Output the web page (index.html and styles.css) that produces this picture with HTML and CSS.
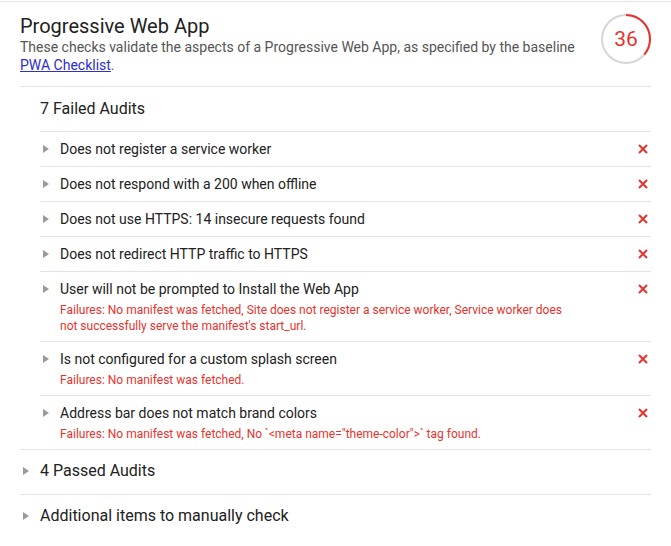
FILE: index.html
```html
<!DOCTYPE html>
<html lang="en">
<head>
<meta charset="utf-8">
<title>Progressive Web App</title>
<link rel="stylesheet" href="styles.css">
</head>
<body>
<div class="report">
  <section class="category">
    <header class="cat-header">
      <div class="cat-text">
        <h1 class="cat-title">Progressive Web App</h1>
        <p class="cat-desc">These checks validate the aspects of a Progressive Web App, as specified by the baseline <a class="cat-link" href="#">PWA Checklist</a>.</p>
      </div>
      <div class="gauge">
        <svg class="gauge-svg" width="50" height="50" viewBox="0 0 50 50">
          <circle cx="25" cy="25" r="24" fill="none" stroke="#d6d6d6" stroke-width="2"/>
          <circle cx="25" cy="25" r="24" fill="none" stroke="#e8322c" stroke-width="2" stroke-dasharray="54.3 200" transform="rotate(-90 25 25)"/>
        </svg>
        <span class="gauge-value">36</span>
      </div>
    </header>

    <div class="group">
      <div class="group-head open-head">7 Failed Audits</div>
      <ul class="audits">
        <li class="audit">
          <span class="tri"></span>
          <div class="audit-body"><div class="audit-title">Does not register a service worker</div></div>
          <span class="fail-x"><svg width="10" height="10" viewBox="0 0 10 10"><path d="M1 1L9 9M9 1L1 9" stroke="#e8322c" stroke-width="2"/></svg></span>
        </li>
        <li class="audit">
          <span class="tri"></span>
          <div class="audit-body"><div class="audit-title">Does not respond with a 200 when offline</div></div>
          <span class="fail-x"><svg width="10" height="10" viewBox="0 0 10 10"><path d="M1 1L9 9M9 1L1 9" stroke="#e8322c" stroke-width="2"/></svg></span>
        </li>
        <li class="audit">
          <span class="tri"></span>
          <div class="audit-body"><div class="audit-title">Does not use HTTPS: 14 insecure requests found</div></div>
          <span class="fail-x"><svg width="10" height="10" viewBox="0 0 10 10"><path d="M1 1L9 9M9 1L1 9" stroke="#e8322c" stroke-width="2"/></svg></span>
        </li>
        <li class="audit">
          <span class="tri"></span>
          <div class="audit-body"><div class="audit-title">Does not redirect HTTP traffic to HTTPS</div></div>
          <span class="fail-x"><svg width="10" height="10" viewBox="0 0 10 10"><path d="M1 1L9 9M9 1L1 9" stroke="#e8322c" stroke-width="2"/></svg></span>
        </li>
        <li class="audit">
          <span class="tri"></span>
          <div class="audit-body">
            <div class="audit-title">User will not be prompted to Install the Web App</div>
            <div class="audit-fail">Failures: No manifest was fetched, Site does not register a service worker, Service worker does not successfully serve the manifest's start_url.</div>
          </div>
          <span class="fail-x"><svg width="10" height="10" viewBox="0 0 10 10"><path d="M1 1L9 9M9 1L1 9" stroke="#e8322c" stroke-width="2"/></svg></span>
        </li>
        <li class="audit">
          <span class="tri"></span>
          <div class="audit-body">
            <div class="audit-title">Is not configured for a custom splash screen</div>
            <div class="audit-fail">Failures: No manifest was fetched.</div>
          </div>
          <span class="fail-x"><svg width="10" height="10" viewBox="0 0 10 10"><path d="M1 1L9 9M9 1L1 9" stroke="#e8322c" stroke-width="2"/></svg></span>
        </li>
        <li class="audit">
          <span class="tri"></span>
          <div class="audit-body">
            <div class="audit-title">Address bar does not match brand colors</div>
            <div class="audit-fail">Failures: No manifest was fetched, No `&lt;meta name="theme-color"&gt;` tag found.</div>
          </div>
          <span class="fail-x"><svg width="10" height="10" viewBox="0 0 10 10"><path d="M1 1L9 9M9 1L1 9" stroke="#e8322c" stroke-width="2"/></svg></span>
        </li>
      </ul>
    </div>

    <div class="group closed">
      <div class="group-head"><span class="tri"></span>4 Passed Audits</div>
    </div>
    <div class="group closed">
      <div class="group-head"><span class="tri"></span>Additional items to manually check</div>
    </div>
  </section>
</div>
</body>
</html>
```

FILE: styles.css
```css
* { box-sizing: border-box; }

html, body {
  margin: 0;
  padding: 0;
  background: #fff;
}

body {
  font-family: Roboto, "Liberation Sans", Arial, sans-serif;
  color: #212121;
}

.report {
  margin-top: 1px;
  border-top: 1px solid #e4e4e4;
}

.category {
  padding: 0 20px;
}

.cat-header {
  display: flex;
  align-items: flex-start;
  padding: 12px 0;
  border-bottom: 1px solid #e4e4e4;
}

.cat-text {
  flex: 1;
  min-width: 0;
}

.cat-title {
  margin: 0;
  font-size: 20px;
  line-height: 24px;
  font-weight: 400;
  color: #212121;
}

.cat-desc {
  margin: 0;
  font-size: 14px;
  line-height: 18px;
  color: #555;
}

.cat-link {
  color: #2d2dd0;
  text-decoration: underline;
}

.gauge {
  position: relative;
  width: 50px;
  height: 50px;
  margin-left: 20px;
  flex: none;
}

.gauge-svg {
  display: block;
}

.gauge-value {
  position: absolute;
  inset: 0;
  display: flex;
  align-items: center;
  justify-content: center;
  font-size: 21px;
  color: #e8322c;
}

.group-head {
  display: flex;
  align-items: center;
  font-size: 16px;
  line-height: 20px;
  padding: 11px 0 13px 0;
  color: #212121;
}

.group-head.open-head {
  padding: 12px 0 12px 20px;
}

.group.closed {
  border-top: 1px solid #e4e4e4;
}

.group.closed .tri {
  margin-left: 3px;
  margin-right: 11px;
}

.audits {
  list-style: none;
  margin: 0 0 0 20px;
  padding: 0;
}

.audit {
  display: flex;
  align-items: flex-start;
  border-top: 1px solid #e4e4e4;
  padding: 7px 0;
}

.tri {
  flex: none;
  width: 0;
  height: 0;
  border-style: solid;
  border-width: 4px 0 4px 6px;
  border-color: transparent transparent transparent #9a9a9a;
}

.audit .tri {
  margin: 6px 11px 0 3px;
}

.audit-body {
  flex: 1;
  min-width: 0;
  padding-right: 76px;
}

.audit-title {
  font-size: 14px;
  line-height: 20px;
  color: #212121;
}

.audit-fail {
  margin-top: 3px;
  font-size: 12px;
  line-height: 16px;
  color: #e8322c;
}

.fail-x {
  flex: none;
  width: 10px;
  height: 20px;
  margin-right: 3px;
  display: flex;
  align-items: center;
}

.fail-x svg {
  display: block;
}
```
